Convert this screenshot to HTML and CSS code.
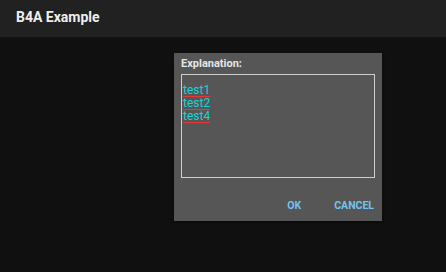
FILE: index.html
```html
<!DOCTYPE html>
<html>
<head>
<meta charset="utf-8">
<link rel="stylesheet" href="styles.css">
</head>
<body>
<div class="appbar"><span class="title">B4A Example</span></div>
<div class="content">
  <div class="dialog">
    <div class="dlg-title">Explanation:</div>
    <div class="textbox">
      <div class="line"><span class="word">test1</span></div>
      <div class="line"><span class="word">test2</span></div>
      <div class="line"><span class="word">test4</span></div>
    </div>
    <div class="buttons">
      <span class="btn">OK</span>
      <span class="btn">CANCEL</span>
    </div>
  </div>
</div>
</body>
</html>
```
FILE: styles.css
```css
html, body {
  margin: 0;
  padding: 0;
  width: 446px;
  height: 272px;
  background: #101010;
  font-family: Roboto, "Liberation Sans", sans-serif;
  overflow: hidden;
}
.appbar {
  height: 37px;
  background: #212121;
  display: flex;
  align-items: center;
  padding-left: 16px;
}
.title {
  color: #eeeeee;
  font-size: 14px;
  font-weight: 700;
  margin-top: -3px;
}
.content {
  padding-top: 16px;
  padding-left: 174px;
}
.dialog {
  width: 208px;
  height: 168px;
  background: #565656;
  box-sizing: border-box;
  padding: 4px 7px 0 7px;
  display: flex;
  flex-direction: column;
  box-shadow: 0 1px 3px rgba(0,0,0,0.5);
}
.dlg-title {
  color: #e6e6e6;
  font-size: 11px;
  font-weight: 700;
  height: 17px;
  line-height: 13px;
}
.textbox {
  width: 194px;
  height: 104px;
  box-sizing: border-box;
  border: 1px solid #cfcfcf;
  padding: 7px 0 0 1px;
}
.line {
  height: 13px;
  line-height: 13px;
}
.word {
  display: inline-block;
  color: #19d3d6;
  font-size: 12px;
  line-height: 11px;
  border-bottom: 1px solid #e53935;
}
.buttons {
  display: flex;
  justify-content: flex-end;
  gap: 33px;
  padding-right: 1px;
  margin-top: 21px;
}
.btn {
  color: #72c3ee;
  font-size: 10.5px;
  font-weight: 700;
}
```
